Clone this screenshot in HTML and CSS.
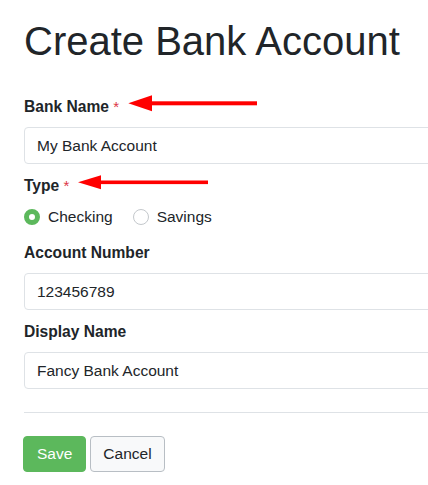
FILE: index.html
```html
<!DOCTYPE html>
<html lang="en">
<head>
<meta charset="utf-8">
<title>Create Bank Account</title>
<link rel="stylesheet" href="styles.css">
</head>
<body>
<div class="page">
  <h1 class="title">Create Bank Account</h1>
  <form class="form">
    <div class="group">
      <label class="label" for="bank">Bank Name <span class="req">*</span></label>
      <input class="input" id="bank" type="text" value="My Bank Account">
    </div>
    <div class="group group-radio">
      <div class="label">Type <span class="req">*</span></div>
      <div class="radios">
        <label class="option"><span class="radio radio-on"></span>Checking</label>
        <label class="option"><span class="radio"></span>Savings</label>
      </div>
    </div>
    <div class="group">
      <label class="label" for="num">Account Number</label>
      <input class="input" id="num" type="text" value="123456789">
    </div>
    <div class="group">
      <label class="label" for="disp">Display Name</label>
      <input class="input" id="disp" type="text" value="Fancy Bank Account">
    </div>
    <hr class="rule">
    <div class="actions">
      <button type="button" class="btn btn-save">Save</button>
      <button type="button" class="btn btn-cancel">Cancel</button>
    </div>
  </form>
  <svg class="annotations" width="428" height="485" viewBox="0 0 428 485" aria-hidden="true">
    <rect x="148" y="101.3" width="109" height="4" fill="#ff0000"/>
    <polygon points="128.3,103.3 152,95.3 152,111.3" fill="#ff0000"/>
    <rect x="98" y="180.5" width="110" height="3.6" fill="#ff0000"/>
    <polygon points="78,182.3 101,175.3 101,189.3" fill="#ff0000"/>
  </svg>
</div>
</body>
</html>
```
FILE: styles.css
```css
html, body {
  margin: 0;
  padding: 0;
  background: #ffffff;
  overflow: hidden;
}

body {
  font-family: "Liberation Sans", Arial, sans-serif;
  color: #212529;
}

.page {
  position: relative;
  width: 600px;
  padding: 17px 0 0 24px;
}

.title {
  margin: 0 0 31px;
  font-size: 40px;
  line-height: 48px;
  font-weight: 400;
  color: #212529;
}

.form {
  margin: 0;
}

.group {
  margin-bottom: 11px;
}

.group-radio {
  margin-bottom: 14px;
}

.label {
  display: block;
  font-size: 15.6px;
  line-height: 22px;
  font-weight: 700;
  margin-bottom: 9px;
}

.req {
  color: #dc3545;
  font-weight: 400;
  font-size: 15px;
}

.input {
  display: block;
  box-sizing: border-box;
  width: 100%;
  height: 37px;
  margin: 0;
  padding: 6px 12px;
  font-family: "Liberation Sans", Arial, sans-serif;
  font-size: 15.5px;
  line-height: 23px;
  color: #212529;
  background: #ffffff;
  border: 1px solid #dee2e6;
  border-radius: 4px;
  outline: none;
}

.radios {
  display: flex;
  align-items: center;
  height: 22px;
}

.option {
  display: flex;
  align-items: center;
  font-size: 15.5px;
  line-height: 22px;
  margin-right: 20px;
}

.radio {
  box-sizing: border-box;
  width: 16px;
  height: 16px;
  border-radius: 50%;
  border: 1px solid #c4c8cc;
  background: #ffffff;
  margin-right: 8px;
}

.radio-on {
  border: 5px solid #5cb85c;
}

.rule {
  margin: 23px 0 23px;
  border: 0;
  border-top: 1px solid #dee2e6;
  height: 0;
}

.actions {
  display: flex;
  gap: 4px;
  margin-left: -1px;
}

.btn {
  box-sizing: border-box;
  height: 36px;
  padding: 0 13px;
  font-family: "Liberation Sans", Arial, sans-serif;
  font-size: 15.5px;
  line-height: 34px;
  border-radius: 4px;
  cursor: pointer;
}

.btn-save {
  color: #ffffff;
  background: #5cb85c;
  border: 1px solid #5cb85c;
}

.btn-cancel {
  padding: 0 12px;
  color: #212529;
  background: #f8f9fa;
  border: 1px solid #b8bec4;
}

.annotations {
  position: absolute;
  top: 0;
  left: 0;
  pointer-events: none;
}
```
